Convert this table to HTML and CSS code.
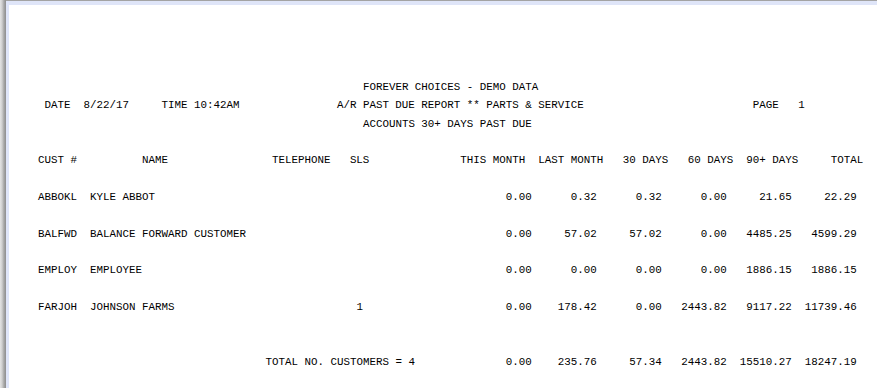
FILE: index.html
```html
<!DOCTYPE html>
<html lang="en">
<head>
<meta charset="utf-8">
<title>A/R Past Due Report</title>
<link rel="stylesheet" href="styles.css">
</head>
<body>
<div class="viewer">
  <div class="page">
    <div class="sheet">
      <div class="report">
        <div class="title">FOREVER CHOICES - DEMO DATA</div>
        <div class="line2"><span> DATE  8/22/17     TIME 10:42AM</span><span>A/R PAST DUE REPORT ** PARTS &amp; SERVICE</span><span>PAGE   1</span></div>
        <div class="title">ACCOUNTS 30+ DAYS PAST DUE</div>

        <div class="colhead gap1">
          <span>CUST #</span><span>NAME</span><span>TELEPHONE</span><span>SLS</span><span>THIS MONTH</span><span>LAST MONTH</span><span>30 DAYS</span><span>60 DAYS</span><span>90+ DAYS</span><span>TOTAL</span>
        </div>

        <div class="row gap1">
          <span>ABBOKL</span><span>KYLE ABBOT</span><span></span>
          <span class="num">0.00</span><span class="num">0.32</span><span class="num">0.32</span><span class="num">0.00</span><span class="num">21.65</span><span class="num">22.29</span>
        </div>
        <div class="row gap1">
          <span>BALFWD</span><span>BALANCE FORWARD CUSTOMER</span><span></span>
          <span class="num">0.00</span><span class="num">57.02</span><span class="num">57.02</span><span class="num">0.00</span><span class="num">4485.25</span><span class="num">4599.29</span>
        </div>
        <div class="row gap1">
          <span>EMPLOY</span><span>EMPLOYEE</span><span></span>
          <span class="num">0.00</span><span class="num">0.00</span><span class="num">0.00</span><span class="num">0.00</span><span class="num">1886.15</span><span class="num">1886.15</span>
        </div>
        <div class="row gap1">
          <span>FARJOH</span><span>JOHNSON FARMS</span><span>1</span>
          <span class="num">0.00</span><span class="num">178.42</span><span class="num">0.00</span><span class="num">2443.82</span><span class="num">9117.22</span><span class="num">11739.46</span>
        </div>

        <div class="totals gap2">
          <span></span><span>TOTAL NO. CUSTOMERS = 4</span>
          <span class="num">0.00</span><span class="num">235.76</span><span class="num">57.34</span><span class="num">2443.82</span><span class="num">15510.27</span><span class="num">18247.19</span>
        </div>
      </div>
    </div>
  </div>
</div>
</body>
</html>
```

FILE: styles.css
```css
html, body {
  margin: 0;
  padding: 0;
  height: 100%;
  background: #ffffff;
}

.viewer {
  height: 100%;
  display: flex;
  background: linear-gradient(to right, #e4e4e4 0, #cfcfcf 2px, #a6a6a6 4px, #8e8e8e 6px);
  padding-left: 6px;
  box-sizing: border-box;
  overflow: hidden;
}

.page {
  flex: 1;
  display: flex;
  border-top: 1px solid #a3a3a3;
  background: #ffffff;
}

.sheet {
  flex: 1;
  border-top: 4px solid #dfe5f8;
  border-left: 3px solid #dfe5f8;
  background: #ffffff;
  padding: 73px 0 0 29px;
}

.report {
  --lh: 18.35px;
  font-family: "Liberation Mono", "DejaVu Sans Mono", monospace;
  font-size: 10.833px;
  line-height: var(--lh);
  color: #000000;
}

.title,
.report span {
  white-space: pre;
}

.title {
  padding-left: 50ch;
}

.line2 {
  display: grid;
  grid-template-columns: 46ch 64ch auto;
}

.gap1 {
  margin-top: var(--lh);
}

.gap2 {
  margin-top: calc(var(--lh) * 2);
}

.colhead {
  display: grid;
  grid-template-columns: 16ch 20ch 12ch 17ch 12ch 13ch 10ch 9ch 13ch auto;
}

.row {
  display: grid;
  grid-template-columns: 8ch 41ch 17ch repeat(6, 10ch);
}

.totals {
  display: grid;
  grid-template-columns: 35ch 31ch repeat(6, 10ch);
}

.num {
  text-align: right;
}
```
